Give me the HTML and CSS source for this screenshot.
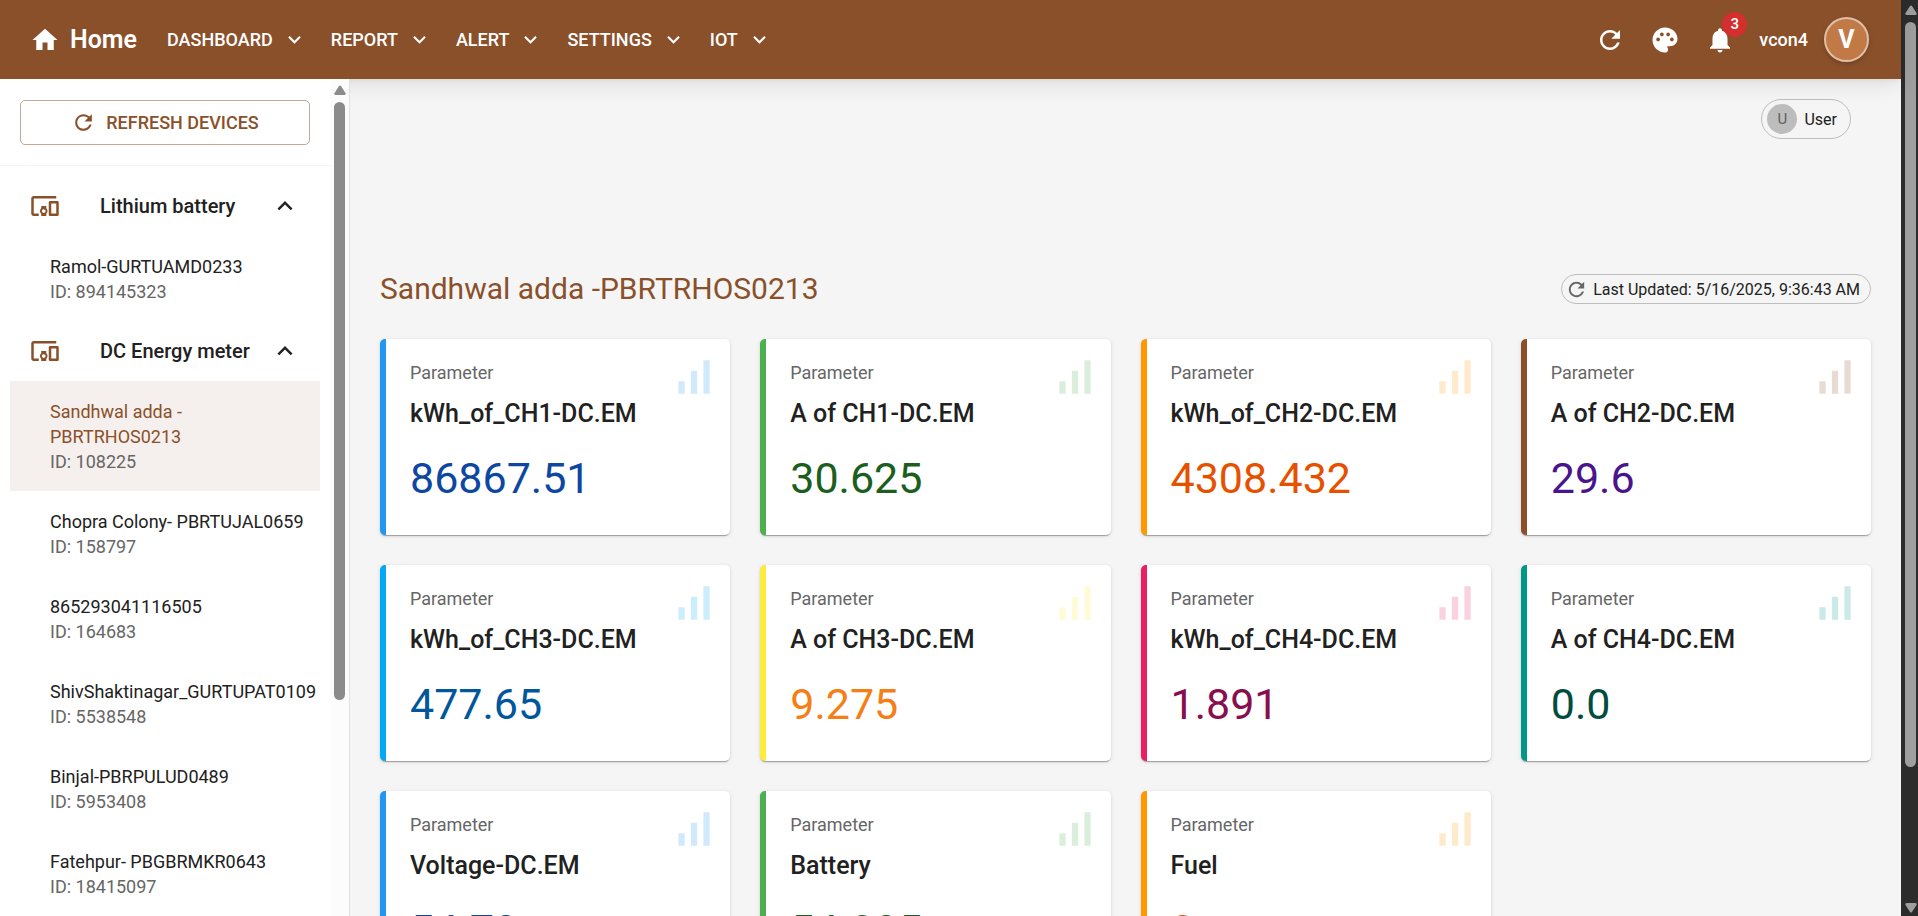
FILE: index.html
```html
<!DOCTYPE html>
<html lang="en">
<head>
<meta charset="utf-8">
<meta name="viewport" content="width=device-width, initial-scale=1">
<title>Home</title>
<link rel="stylesheet" href="styles.css">
</head>
<body>
<svg class="sprite" aria-hidden="true">
  <symbol id="i-home" viewBox="0 0 24 24"><path d="M10 20v-6h4v6h5v-8h3L12 3 2 12h3v8z"/></symbol>
  <symbol id="i-down" viewBox="0 0 24 24"><path d="M7.41 8.59 12 13.17l4.59-4.58L18 10l-6 6-6-6z"/></symbol>
  <symbol id="i-less" viewBox="0 0 24 24"><path d="m12 8-6 6 1.41 1.41L12 10.83l4.59 4.58L18 14z"/></symbol>
  <symbol id="i-refresh" viewBox="0 0 24 24"><path d="M17.65 6.35C16.2 4.9 14.21 4 12 4c-4.42 0-7.99 3.58-7.99 8s3.57 8 7.99 8c3.73 0 6.84-2.55 7.73-6h-2.08c-.82 2.33-3.04 4-5.65 4-3.31 0-6-2.69-6-6s2.69-6 6-6c1.66 0 3.14.69 4.22 1.78L13 11h7V4z"/></symbol>
  <symbol id="i-palette" viewBox="0 0 24 24"><path d="M12 2C6.49 2 2 6.49 2 12s4.49 10 10 10c1.38 0 2.5-1.12 2.5-2.5 0-.61-.23-1.2-.64-1.67-.08-.1-.13-.21-.13-.33 0-.28.22-.5.5-.5H16c3.31 0 6-2.69 6-6 0-4.96-4.49-9-10-9m5.5 11c-.83 0-1.5-.67-1.5-1.5s.67-1.5 1.5-1.5 1.5.67 1.5 1.5-.67 1.5-1.5 1.5m-3-4c-.83 0-1.5-.67-1.5-1.5S13.67 6 14.5 6s1.5.67 1.5 1.5S15.33 9 14.5 9M5 11.5c0-.83.67-1.5 1.5-1.5s1.5.67 1.5 1.5S7.33 13 6.5 13 5 12.33 5 11.5m6-4c0 .83-.67 1.5-1.5 1.5S8 8.33 8 7.5 8.67 6 9.5 6s1.5.67 1.5 1.5"/></symbol>
  <symbol id="i-bell" viewBox="0 0 24 24"><path d="M12 22c1.1 0 2-.9 2-2h-4c0 1.1.89 2 2 2m6-6v-5c0-3.07-1.64-5.64-4.5-6.32V4c0-.83-.67-1.5-1.5-1.5s-1.5.67-1.5 1.5v.68C7.63 5.36 6 7.92 6 11v5l-2 2v1h16v-1z"/></symbol>
  <symbol id="i-devices" viewBox="0 0 24 24"><path d="M3 6h18V4H3c-1.1 0-2 .9-2 2v12c0 1.1.9 2 2 2h4v-2H3zm10 6H9v1.78c-.61.55-1 1.33-1 2.22s.39 1.67 1 2.22V20h4v-1.78c.61-.55 1-1.34 1-2.22s-.39-1.67-1-2.22zm-2 5.5c-.83 0-1.5-.67-1.5-1.5s.67-1.5 1.5-1.5 1.5.67 1.5 1.5-.67 1.5-1.5 1.5M22 8h-6c-.5 0-1 .5-1 1v10c0 .5.5 1 1 1h6c.5 0 1-.5 1-1V9c0-.5-.5-1-1-1m-1 10h-4v-8h4z"/></symbol>
  <symbol id="i-bars" viewBox="0 0 24 24"><path d="M17 4h3v16h-3zM5 14h3v6H5zm6-5h3v11h-3z"/></symbol>
  <symbol id="i-tri" viewBox="0 0 12 10"><path d="M5 1Q6 0 7 1L11.600 8.200Q12 10 10.500 10H1.500Q0 10 .4 8.200z"/></symbol>
</svg>

<div class="window">
  <div class="app">
    <header class="topbar">
      <a class="brand" href="#"><svg class="icon"><use href="#i-home"/></svg>Home</a>
      <nav class="menu">
        <button type="button" class="menu-item">DASHBOARD<svg class="icon icon-sm"><use href="#i-down"/></svg></button>
        <button type="button" class="menu-item">REPORT<svg class="icon icon-sm"><use href="#i-down"/></svg></button>
        <button type="button" class="menu-item">ALERT<svg class="icon icon-sm"><use href="#i-down"/></svg></button>
        <button type="button" class="menu-item">SETTINGS<svg class="icon icon-sm"><use href="#i-down"/></svg></button>
        <button type="button" class="menu-item">IOT<svg class="icon icon-sm"><use href="#i-down"/></svg></button>
      </nav>
      <div class="tools">
        <button type="button" class="tool" aria-label="Refresh"><svg class="icon"><use href="#i-refresh"/></svg></button>
        <button type="button" class="tool" aria-label="Theme"><svg class="icon"><use href="#i-palette"/></svg></button>
        <button type="button" class="tool" aria-label="Notifications"><svg class="icon"><use href="#i-bell"/></svg><span class="badge">3</span></button>
      </div>
      <span class="account">vcon4</span>
      <button type="button" class="avatar" aria-label="Account">V</button>
    </header>

    <div class="body">
      <aside class="sidebar">
        <div class="sidebar-content">
          <div class="sidebar-top">
            <button type="button" class="refresh"><svg class="icon icon-sm"><use href="#i-refresh"/></svg>REFRESH DEVICES</button>
          </div>
          <nav class="devices">
            <button type="button" class="group"><svg class="icon"><use href="#i-devices"/></svg><span class="group-name">Lithium battery</span><svg class="icon chevron"><use href="#i-less"/></svg></button>
            <a class="device" href="#"><span class="device-name">Ramol-GURTUAMD0233</span><span class="device-id">ID: 894145323</span></a>
            <button type="button" class="group"><svg class="icon"><use href="#i-devices"/></svg><span class="group-name">DC Energy meter</span><svg class="icon chevron"><use href="#i-less"/></svg></button>
            <a class="device selected" href="#" aria-current="page"><span class="device-name">Sandhwal adda -PBRTRHOS0213</span><span class="device-id">ID: 108225</span></a>
            <a class="device" href="#"><span class="device-name">Chopra Colony- PBRTUJAL0659</span><span class="device-id">ID: 158797</span></a>
            <a class="device" href="#"><span class="device-name">865293041116505</span><span class="device-id">ID: 164683</span></a>
            <a class="device" href="#"><span class="device-name">ShivShaktinagar_GURTUPAT0109</span><span class="device-id">ID: 5538548</span></a>
            <a class="device" href="#"><span class="device-name">Binjal-PBRPULUD0489</span><span class="device-id">ID: 5953408</span></a>
            <a class="device" href="#"><span class="device-name">Fatehpur- PBGBRMKR0643</span><span class="device-id">ID: 18415097</span></a>
          </nav>
        </div>
        <div class="scroll scroll-side" aria-hidden="true">
          <svg class="arrow"><use href="#i-tri"/></svg>
          <div class="thumb"></div>
        </div>
      </aside>

      <main class="main">
        <div class="user-row">
          <div class="chip chip-user"><span class="chip-avatar">U</span>User</div>
        </div>
        <div class="title-row">
          <h1 class="title">Sandhwal adda -PBRTRHOS0213</h1>
          <div class="chip chip-time"><svg class="icon"><use href="#i-refresh"/></svg>Last Updated: 5/16/2025, 9:36:43 AM</div>
        </div>
        <div class="cards">
          <section class="card blue"><svg class="bars"><use href="#i-bars"/></svg><p class="label">Parameter</p><h2 class="name">kWh_of_CH1-DC.EM</h2><p class="value">86867.51</p></section>
          <section class="card green"><svg class="bars"><use href="#i-bars"/></svg><p class="label">Parameter</p><h2 class="name">A of CH1-DC.EM</h2><p class="value">30.625</p></section>
          <section class="card orange"><svg class="bars"><use href="#i-bars"/></svg><p class="label">Parameter</p><h2 class="name">kWh_of_CH2-DC.EM</h2><p class="value">4308.432</p></section>
          <section class="card brown"><svg class="bars"><use href="#i-bars"/></svg><p class="label">Parameter</p><h2 class="name">A of CH2-DC.EM</h2><p class="value">29.6</p></section>
          <section class="card sky"><svg class="bars"><use href="#i-bars"/></svg><p class="label">Parameter</p><h2 class="name">kWh_of_CH3-DC.EM</h2><p class="value">477.65</p></section>
          <section class="card yellow"><svg class="bars"><use href="#i-bars"/></svg><p class="label">Parameter</p><h2 class="name">A of CH3-DC.EM</h2><p class="value">9.275</p></section>
          <section class="card pink"><svg class="bars"><use href="#i-bars"/></svg><p class="label">Parameter</p><h2 class="name">kWh_of_CH4-DC.EM</h2><p class="value">1.891</p></section>
          <section class="card teal"><svg class="bars"><use href="#i-bars"/></svg><p class="label">Parameter</p><h2 class="name">A of CH4-DC.EM</h2><p class="value">0.0</p></section>
          <section class="card blue"><svg class="bars"><use href="#i-bars"/></svg><p class="label">Parameter</p><h2 class="name">Voltage-DC.EM</h2><p class="value">54.78</p></section>
          <section class="card green"><svg class="bars"><use href="#i-bars"/></svg><p class="label">Parameter</p><h2 class="name">Battery</h2><p class="value">54.085</p></section>
          <section class="card orange"><svg class="bars"><use href="#i-bars"/></svg><p class="label">Parameter</p><h2 class="name">Fuel</h2><p class="value">0</p></section>
        </div>
      </main>
    </div>
  </div>
  <div class="scroll scroll-page" aria-hidden="true">
    <svg class="arrow"><use href="#i-tri"/></svg>
    <div class="thumb"></div>
    <svg class="arrow arrow-down"><use href="#i-tri"/></svg>
  </div>
</div>
</body>
</html>
```

FILE: styles.css
```css
:root {
  --brown: #8a502a;
  --ink: #212121;
  --muted: #666;
}

* { box-sizing: border-box; }

body {
  margin: 0;
  font-family: Roboto, "Liberation Sans", sans-serif;
  font-size: 18px;
  line-height: 25px;
  color: var(--ink);
}

button {
  font: inherit;
  color: inherit;
  background: none;
  border: 0;
  padding: 0;
  cursor: pointer;
}

a { color: inherit; text-decoration: none; }

.sprite { position: absolute; width: 0; height: 0; }

.icon { width: 30px; height: 30px; fill: currentColor; flex: none; }
.icon-sm { width: 25px; height: 25px; }

.window { display: flex; height: 100vh; overflow: hidden; }

.app { flex: 1; min-width: 0; display: flex; flex-direction: column; }

/* Top bar */
.topbar {
  flex: none;
  display: flex;
  align-items: center;
  height: 79px;
  padding: 0 32px 0 30px;
  background: var(--brown);
  color: #fff;
  position: relative;
  z-index: 1;
  box-shadow: 0 3px 5px -1px rgba(0, 0, 0, .04), 0 5px 20px rgba(0, 0, 0, .1);
}

.brand {
  display: flex;
  align-items: center;
  gap: 10px;
  font-size: 25px;
  font-weight: 600;
}

.menu { display: flex; gap: 24px; margin-left: 30px; }

.menu-item {
  display: flex;
  align-items: center;
  gap: 9px;
  font-weight: 500;
}

.tools { display: flex; gap: 25px; margin-left: auto; }
.tool { position: relative; display: flex; }

.badge {
  position: absolute;
  top: -13px;
  right: -12px;
  width: 25px;
  height: 25px;
  border-radius: 50%;
  background: #d32f2f;
  font-size: 15px;
  font-weight: 500;
  text-align: center;
}

.account { margin-left: 24px; font-weight: 500; }

.avatar {
  width: 45px;
  height: 45px;
  margin-left: 16px;
  border: 2px solid #e0bfa8;
  border-radius: 50%;
  background: #c17a45;
  box-shadow: 0 2px 5px rgba(0, 0, 0, .2);
  font-size: 25px;
  font-weight: 700;
}

.body { flex: 1; min-height: 0; display: flex; }

/* Sidebar */
.sidebar {
  flex: none;
  display: flex;
  width: 350px;
  background: #fff;
  border-right: 1px solid #e0e0e0;
  position: relative;
  z-index: 2;
  overflow: hidden;
}

.sidebar-content { flex: 1; min-width: 0; }

.sidebar-top { padding: 21px 20px 20px; border-bottom: 1px solid #f5f5f5; }

.refresh {
  display: flex;
  align-items: center;
  justify-content: center;
  gap: 10px;
  width: 100%;
  height: 45px;
  border: 1px solid #c4a794;
  border-radius: 5px;
  color: var(--brown);
  font-weight: 500;
}

.devices { padding: 10px; }

.group {
  display: flex;
  align-items: center;
  width: 100%;
  height: 60px;
  padding: 0 20px;
  text-align: left;
}

.group .icon { color: var(--brown); }
.group .chevron { color: var(--ink); }
.group-name { flex: 1; margin-left: 40px; font-size: 20px; font-weight: 500; }

.device { display: block; padding: 18px 10px 17px 40px; }
.device-name, .device-id { display: block; }
.device-id { color: var(--muted); }
.selected { background: #f5f0ee; }
.selected .device-name { color: var(--brown); }

/* Scroll bars */
.scroll { flex: none; display: flex; flex-direction: column; align-items: center; }
.arrow { flex: none; width: 12px; height: 10px; fill: currentColor; }
.arrow-down { transform: rotate(180deg); margin-top: auto; }
.thumb { width: 11px; border-radius: 6px; background: currentColor; }

.scroll-side { width: 19px; padding-top: 6px; background: #fcfcfc; color: #8b8b8b; }
.scroll-side .thumb { height: 72%; margin-top: 7px; }

.scroll-page { width: 17px; padding: 5px 0 3px 2px; background: #2c2c2c; color: #9f9f9f; }
.scroll-page .thumb { height: 82%; margin-top: 7px; }

/* Main */
.main { flex: 1; min-width: 0; padding: 20px 30px; background: #f5f5f5; overflow: hidden; }

.user-row { display: flex; justify-content: flex-end; padding-right: 20px; margin-bottom: 130px; }

.chip {
  display: flex;
  align-items: center;
  border: 1px solid #bdbdbd;
  border-radius: 20px;
  font-size: 16px;
  white-space: nowrap;
}

.chip-user { height: 40px; gap: 7px; padding: 0 13px 0 5px; }

.chip-avatar {
  width: 30px;
  height: 30px;
  border-radius: 50%;
  background: #bdbdbd;
  color: #616161;
  font-size: 15px;
  line-height: 30px;
  text-align: center;
}

.chip-time { height: 30px; gap: 5px; padding: 0 10px 0 3px; }
.chip-time .icon { width: 23px; height: 23px; color: var(--muted); }

.title-row {
  display: flex;
  align-items: center;
  justify-content: space-between;
  margin-bottom: 30px;
}

.title { margin: 0; font-size: 30px; line-height: 40px; font-weight: 400; color: var(--brown); }

.cards { display: grid; grid-template-columns: repeat(4, minmax(0, 1fr)); gap: 30px; }

.card {
  position: relative;
  padding: 20px 24px 31px;
  border-left: 6px solid var(--accent);
  border-radius: 5px;
  background: #fff;
  box-shadow: 0 3px 1px -2px rgba(0, 0, 0, .2), 0 1px 1px rgba(0, 0, 0, .14), 0 1px 4px rgba(0, 0, 0, .12);
}

.bars {
  position: absolute;
  top: 13px;
  right: 12px;
  width: 50px;
  height: 50px;
  fill: var(--accent);
  opacity: .2;
}

.label, .name, .value { margin: 0; }
.label { margin-bottom: 10px; font-size: 18px; line-height: 27px; color: var(--muted); }
.name { margin-bottom: 20px; font-size: 25px; line-height: 36px; font-weight: 500; }
.value { font-size: 43px; line-height: 52px; color: var(--strong); }

.blue { --accent: #2196f3; --strong: #0d47a1; }
.green { --accent: #4caf50; --strong: #1b5e20; }
.orange { --accent: #ff9800; --strong: #e65100; }
.brown { --accent: #8a502a; --strong: #4a148c; }
.sky { --accent: #03a9f4; --strong: #01579b; }
.yellow { --accent: #ffeb3b; --strong: #f57f17; }
.pink { --accent: #e91e63; --strong: #880e4f; }
.teal { --accent: #009688; --strong: #004d40; }
```
